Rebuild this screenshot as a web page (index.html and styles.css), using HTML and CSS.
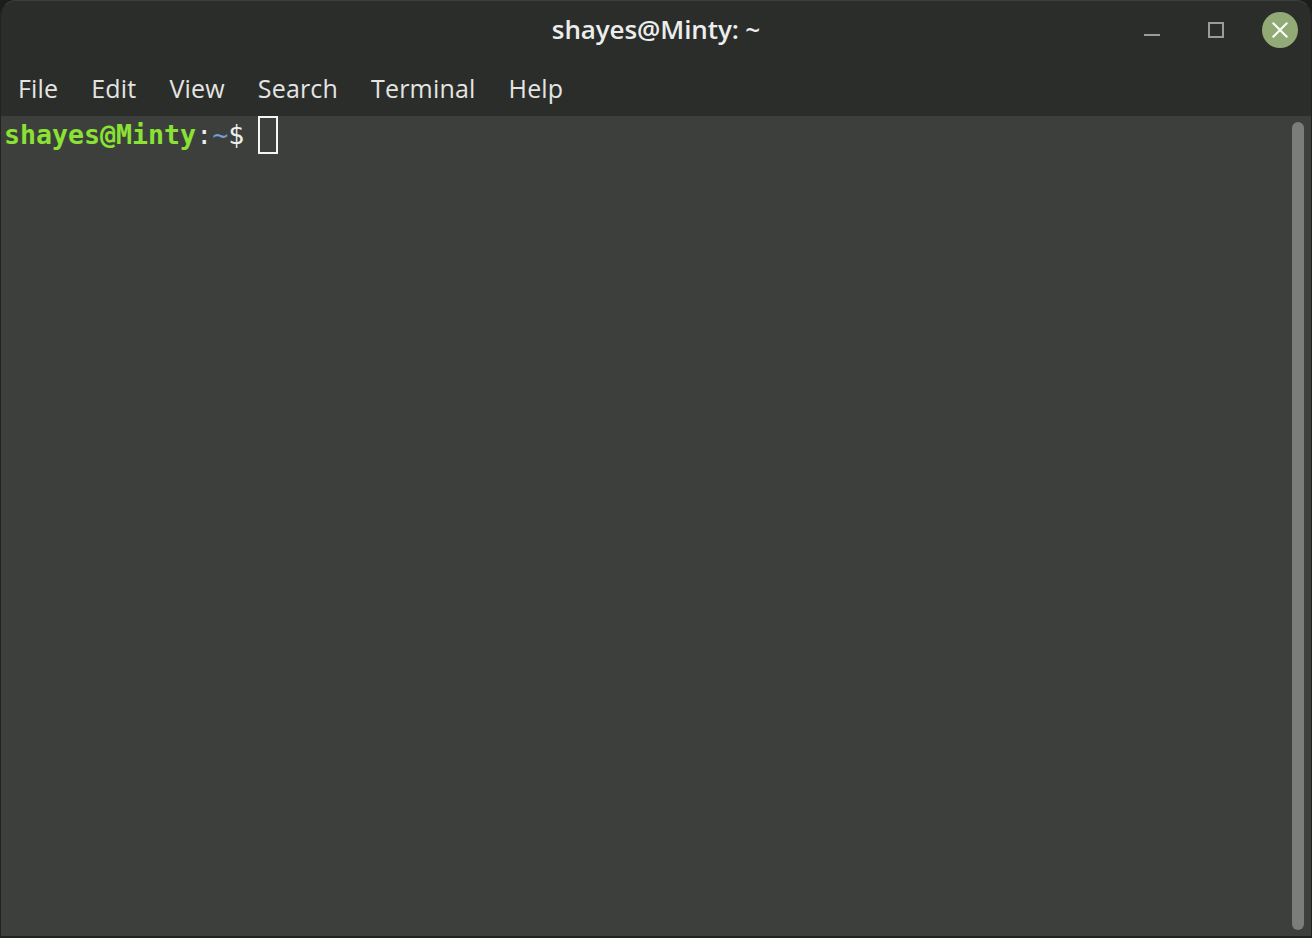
FILE: index.html
```html
<!DOCTYPE html>
<html lang="en">
<head>
<meta charset="utf-8">
<title>shayes@Minty: ~</title>
<link rel="stylesheet" href="styles.css">
</head>
<body>
<div class="window">
  <header class="titlebar">
    <div class="title">shayes@Minty: ~</div>
    <div class="controls">
      <button class="ctl"><svg width="16" height="16" viewBox="0 0 16 16"><rect x="0" y="12" width="16" height="2" fill="#9a9c99"/></svg></button>
      <button class="ctl"><svg width="16" height="16" viewBox="0 0 16 16"><rect x="1" y="1" width="14" height="14" fill="none" stroke="#9a9c99" stroke-width="2"/></svg></button>
      <button class="ctl close"><svg width="16" height="16" viewBox="0 0 16 16"><path d="M0.7 0.7L15.3 15.3M15.3 0.7L0.7 15.3" stroke="#fff" stroke-width="2" fill="none"/></svg></button>
    </div>
  </header>
  <nav class="menubar">
    <span class="menu">File</span>
    <span class="menu">Edit</span>
    <span class="menu">View</span>
    <span class="menu">Search</span>
    <span class="menu">Terminal</span>
    <span class="menu">Help</span>
  </nav>
  <main class="terminal">
    <div class="prompt"><span class="user">shayes@Minty</span><span class="colon">:</span><span class="path">~</span><span class="dollar">$ </span><span class="cursor"></span></div>
    <div class="scrollbar"></div>
  </main>
</div>
</body>
</html>
```
FILE: styles.css
```css
html, body {
  margin: 0;
  padding: 0;
  width: 1312px;
  height: 938px;
  overflow: hidden;
  background: #1c1d1b;
}
.window {
  box-sizing: border-box;
  width: 1312px;
  height: 938px;
  display: flex;
  flex-direction: column;
  background: #2b2d2a;
  border: 1px solid #232422;
  border-top-color: #3d3f3c;
  border-bottom: 2px solid #222321;
  border-radius: 16px 16px 0 0;
  overflow: hidden;
}
.titlebar {
  height: 58px;
  flex: none;
  position: relative;
  display: flex;
  justify-content: flex-end;
  align-items: center;
}
.title {
  position: absolute;
  left: 0;
  right: 0;
  top: 10px;
  text-align: center;
  font: 600 26px/36px "Open Sans", sans-serif;
  letter-spacing: -0.1px;
  color: #eceded;
}
.controls {
  display: flex;
  align-items: center;
  gap: 28px;
  padding-right: 13px;
}
.ctl {
  width: 36px;
  height: 36px;
  padding: 0;
  border: 0;
  background: none;
  display: flex;
  align-items: center;
  justify-content: center;
}
.close {
  border-radius: 50%;
  background: #92ab76;
}
.menubar {
  height: 57px;
  flex: none;
  display: flex;
  gap: 33px;
  align-items: flex-start;
  padding-left: 17px;
  font: 500 25px/58px "Open Sans", sans-serif;
  letter-spacing: 0.18px;
  color: #e4e5e3;
}
.terminal {
  flex: 1;
  display: flex;
  justify-content: space-between;
  background: #3d3f3c;
}
.prompt {
  padding-left: 3px;
  font: 400 26.6px/38px "DejaVu Sans Mono", monospace;
  white-space: pre;
  display: flex;
  align-items: flex-start;
  height: 38px;
}
.user {
  font-weight: 700;
  color: #8ae234;
}
.colon, .dollar {
  color: #eeeeec;
}
.path {
  color: #729fcf;
}
.cursor {
  box-sizing: border-box;
  width: 20px;
  height: 38px;
  margin-left: -2px;
  border: 2px solid #f4f4f4;
}
.scrollbar {
  width: 12px;
  margin: 6px 7px 6px 0;
  border-radius: 6px;
  background: #7b7d7a;
}
```
